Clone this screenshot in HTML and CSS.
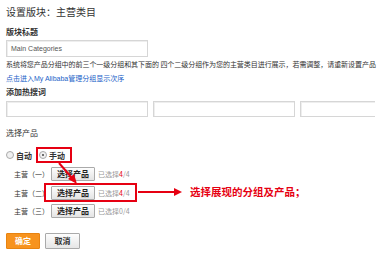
FILE: index.html
```html
<!DOCTYPE html>
<html lang="zh-CN">
<head>
<meta charset="utf-8">
<link rel="stylesheet" href="styles.css">
</head>
<body>
<div class="page">
  <div class="title">设置版块：主营类目</div>
  <div class="label l1">版块标题</div>
  <div class="input wide">Main Categories</div>
  <div class="desc">系统将您产品分组中的前三个一级分组和其下面的 四个二级分组作为您的主营类目进行展示，若需调整，请重新设置产品</div>
  <a class="link">点击进入<span class="lat">My Alibaba</span>管理分组显示次序</a>
  <div class="label l2">添加热搜词</div>
  <div class="inputs">
    <div class="input"></div>
    <div class="input"></div>
    <div class="input short"></div>
  </div>
  <div class="label l3">选择产品</div>
  <div class="radios">
    <span class="radio"><i class="dot"></i>自动</span>
    <span class="radio hl"><i class="dot on"></i>手动</span>
  </div>
  <div class="rows">
    <div class="row"><span class="rl">主营（一）</span><button class="pick">选择产品</button><span class="cnt">已选择<em>4</em>/4</span></div>
    <div class="row"><span class="rl">主营（二）</span><button class="pick">选择产品</button><span class="cnt">已选择<em>4</em>/4</span></div>
    <div class="row"><span class="rl">主营（三）</span><button class="pick">选择产品</button><span class="cnt">已选择0/4</span></div>
  </div>
  <div class="actions">
    <button class="ok">确定</button>
    <button class="cancel">取消</button>
  </div>

  <div class="box2"></div>
  <svg class="arrows" width="380" height="253" viewBox="0 0 380 253">
    <line x1="59" y1="163" x2="72" y2="178" stroke="#e60012" stroke-width="2"/>
    <polygon points="77,184 68,179 74,174" fill="#e60012"/>
    <line x1="138" y1="192" x2="176" y2="192" stroke="#e60012" stroke-width="2"/>
    <polygon points="182,192 174,188 174,196" fill="#e60012"/>
  </svg>
  <div class="note">选择展现的分组及产品；</div>
</div>
</body>
</html>
```

FILE: styles.css
```css
html, body {
  margin: 0;
  padding: 0;
  background: #fff;
}

.page {
  position: relative;
  width: 380px;
  height: 253px;
  overflow: hidden;
  padding: 0 6px;
  box-sizing: border-box;
  font-family: "Noto Sans CJK SC", "Liberation Sans", sans-serif;
  color: #333;
}

.title {
  font-size: 10px;
  line-height: 22px;
  height: 22px;
  padding-top: 1px;
  color: #333;
}

.label {
  font-size: 8px;
  font-weight: bold;
  color: #333;
}

.l1 {
  line-height: 17px;
  height: 17px;
}

.input {
  box-sizing: border-box;
  width: 142px;
  height: 17px;
  border: 1px solid #d6d6d6;
  box-shadow: inset 1px 1px 0 #eee;
  font-family: "Liberation Sans", sans-serif;
  font-size: 7px;
  line-height: 15px;
  padding-left: 4px;
  color: #555;
  flex: none;
}

.inputs .input.short {
  width: 75px;
  border-right: none;
}

.desc {
  font-size: 7px;
  line-height: 15px;
  height: 15px;
  white-space: nowrap;
  letter-spacing: -0.05px;
  color: #333;
}

.link {
  display: block;
  font-size: 7px;
  line-height: 12px;
  height: 12px;
  color: #1a62c8;
  white-space: nowrap;
}

.lat {
  font-family: "Liberation Sans", sans-serif;
}

.l2 {
  line-height: 16px;
  height: 16px;
}

.inputs {
  display: flex;
  gap: 5px;
  margin-top: 1px;
  height: 16px;
}

.inputs .input {
  height: 16px;
}

.l3 {
  margin-top: 8px;
  line-height: 16px;
  height: 16px;
  font-weight: normal;
}

.radios {
  margin-top: 6px;
  height: 16px;
  display: flex;
  align-items: center;
  font-size: 8px;
  font-weight: bold;
}

.radio {
  display: flex;
  align-items: center;
  height: 16px;
  box-sizing: border-box;
}

.dot {
  display: inline-block;
  width: 6px;
  height: 6px;
  border: 1px solid #aaa;
  border-radius: 50%;
  background: #f0f0f0;
  margin-right: 2px;
  position: relative;
}

.dot.on::after {
  content: "";
  position: absolute;
  left: 2px;
  top: 2px;
  width: 2px;
  height: 2px;
  border-radius: 50%;
  background: #444;
}

.hl {
  margin-left: 4px;
  border: 2px solid #e60012;
  padding: 0 5px 0 1px;
}

.rows {
  margin-top: 2px;
}

.row {
  height: 18.5px;
  display: flex;
  align-items: center;
  padding-left: 8px;
  font-size: 7px;
}

.rl {
  width: 37px;
  color: #333;
}

.pick {
  box-sizing: border-box;
  width: 44px;
  height: 14px;
  padding: 0;
  border: 1px solid #aaa;
  border-radius: 1px;
  background: linear-gradient(#fdfdfd, #e4e4e4);
  font-family: "Noto Sans CJK SC", sans-serif;
  font-size: 8px;
  font-weight: bold;
  color: #222;
  line-height: 12px;
}

.cnt {
  margin-left: 3px;
  color: #999;
  font-family: "Noto Sans CJK SC", "Liberation Sans", sans-serif;
}

.cnt em {
  font-style: normal;
  color: #e60012;
}

.actions {
  margin-top: 12px;
  display: flex;
  gap: 5px;
}

.actions button {
  box-sizing: border-box;
  height: 16px;
  padding: 0;
  border-radius: 1px;
  font-family: "Noto Sans CJK SC", sans-serif;
  font-size: 8px;
  font-weight: bold;
  line-height: 14px;
}

.ok {
  width: 34px;
  background: #f7931e;
  border: 1px solid #e88310;
  color: #fff;
}

.cancel {
  width: 35px;
  background: linear-gradient(#fdfdfd, #e6e6e6);
  border: 1px solid #aaa;
  color: #333;
}

.box2 {
  position: absolute;
  left: 44px;
  top: 183px;
  width: 93px;
  height: 19px;
  box-sizing: border-box;
  border: 2px solid #e60012;
}

.arrows {
  position: absolute;
  left: 0;
  top: 0;
  pointer-events: none;
}

.note {
  position: absolute;
  left: 190px;
  top: 185px;
  font-size: 10.5px;
  line-height: 14px;
  font-weight: bold;
  color: #e60012;
  white-space: nowrap;
}
```
